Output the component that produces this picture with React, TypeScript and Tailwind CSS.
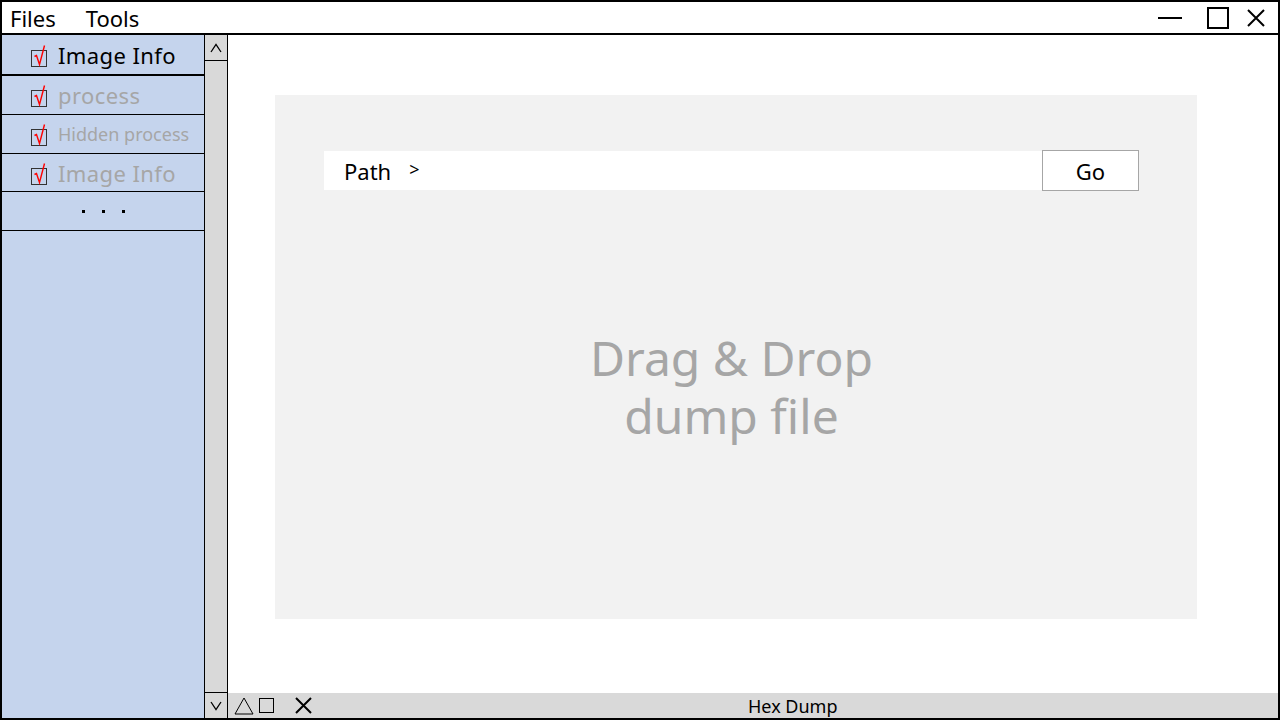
import React from "react";

const font = { fontFamily: '"Noto Sans", "Noto Sans CJK KR", sans-serif' };

function Check() {
  return (
    <span className="relative inline-block w-[16px] h-[17px] border border-[#333] shrink-0 mt-[7px]">
      <svg width="16" height="24" viewBox="0 0 16 24" className="absolute left-[0px] top-[-7px]">
        <path d="M2.5 12.5 L4.5 11.5 L7.5 20.5 L12.5 1.5" fill="none" stroke="#ff0000" strokeWidth="1.4" />
      </svg>
    </span>
  );
}

const items = [
  { label: "Image Info", cls: "text-[22px] text-black tracking-[0.4px]", row: "h-[41px] border-b-2" },
  { label: "process", cls: "text-[22px] text-[#a6a6a6] tracking-[0.4px]", row: "h-[39px] border-b" },
  { label: "Hidden process", cls: "text-[18px] text-[#a6a6a6]", row: "h-[39px] border-b" },
  { label: "Image Info", cls: "text-[22px] text-[#a6a6a6] tracking-[0.4px]", row: "h-[38px] border-b" },
];

export default function App() {
  return (
    <div
      className="w-[1280px] h-[720px] border-2 border-black bg-white flex flex-col overflow-hidden"
      style={font}
    >
      {/* Title / menu bar */}
      <div className="h-[33px] border-b-2 border-black flex items-center shrink-0">
        <span className="ml-[8px] text-[22px] leading-none">Files</span>
        <span className="ml-[30px] text-[22px] leading-none">Tools</span>
        <div className="ml-auto flex items-center h-full">
          <span className="w-[24px] h-[2px] bg-black mr-[25px]" />
          <span className="w-[22px] h-[22px] border-2 border-black mr-[18px]" />
          <svg width="18" height="18" viewBox="0 0 18 18" className="mr-[13px]">
            <path d="M1 1 L17 17 M17 1 L1 17" stroke="black" strokeWidth="2" />
          </svg>
        </div>
      </div>

      <div className="flex-1 flex min-h-0">
        {/* Sidebar */}
        <div className="w-[203px] border-r border-black bg-[#c5d4ed] flex flex-col shrink-0">
          {items.map((it, i) => (
            <div
              key={i}
              className={`${it.row} border-black flex items-center pl-[29px] gap-[11px] shrink-0`}
            >
              <Check />
              <span className={`${it.cls} leading-none whitespace-nowrap`}>{it.label}</span>
            </div>
          ))}
          <div className="h-[39px] border-b border-black flex items-center justify-center gap-[17px] shrink-0">
            <span className="w-[3px] h-[3px] bg-black" />
            <span className="w-[3px] h-[3px] bg-black" />
            <span className="w-[3px] h-[3px] bg-black" />
          </div>
        </div>

        {/* Scrollbar */}
        <div className="w-[23px] border-r border-black bg-[#d9d9d9] flex flex-col shrink-0">
          <div className="h-[26px] border-b border-black flex items-center justify-center">
            <svg width="12" height="10" viewBox="0 0 12 10">
              <path d="M1 9 L6 1.5 L11 9" fill="none" stroke="black" strokeWidth="1.3" />
            </svg>
          </div>
          <div className="flex-1" />
          <div className="h-[26px] border-t border-black flex items-center justify-center">
            <svg width="12" height="10" viewBox="0 0 12 10">
              <path d="M1 1 L6 8.5 L11 1" fill="none" stroke="black" strokeWidth="1.3" />
            </svg>
          </div>
        </div>

        {/* Main */}
        <div className="flex-1 flex flex-col min-w-0">
          <div className="flex-1 pt-[60px] pl-[47px]">
            <div className="w-[922px] h-[524px] bg-[#f2f2f2] flex flex-col pt-[55px] pl-[49px]">
              <div className="flex items-center">
                <div className="w-[718px] h-[39px] bg-white flex items-center pl-[20px]">
                  <span className="text-[22px] leading-none">Path</span>
                  <span className="ml-[18px] text-[18px] leading-none -mt-[4px]">&gt;</span>
                </div>
                <div className="w-[97px] h-[41px] bg-white border border-[#a6a6a6] flex items-center justify-center text-[22px] leading-none">
                  Go
                </div>
              </div>
              <div className="flex-1 flex flex-col items-center justify-center pr-[58px] pb-[36px] text-[48px] leading-[58px] text-[#a6a6a6]">
                <span className="block">Drag &amp; Drop</span>
                <span className="block">dump file</span>
              </div>
            </div>
          </div>

          {/* Bottom bar */}
          <div className="h-[25px] bg-[#d9d9d9] flex items-center shrink-0">
            <svg width="20" height="18" viewBox="0 0 20 18" className="ml-[6px]">
              <path d="M10 1 L19 17 L1 17 Z" fill="none" stroke="black" strokeWidth="1" />
            </svg>
            <span className="ml-[5px] w-[15px] h-[15px] border border-black" />
            <svg width="17" height="17" viewBox="0 0 17 17" className="ml-[21px]">
              <path d="M1 1 L16 16 M16 1 L1 16" stroke="black" strokeWidth="2" />
            </svg>
            <span className="ml-[436px] text-[18px] leading-none">Hex Dump</span>
          </div>
        </div>
      </div>
    </div>
  );
}
